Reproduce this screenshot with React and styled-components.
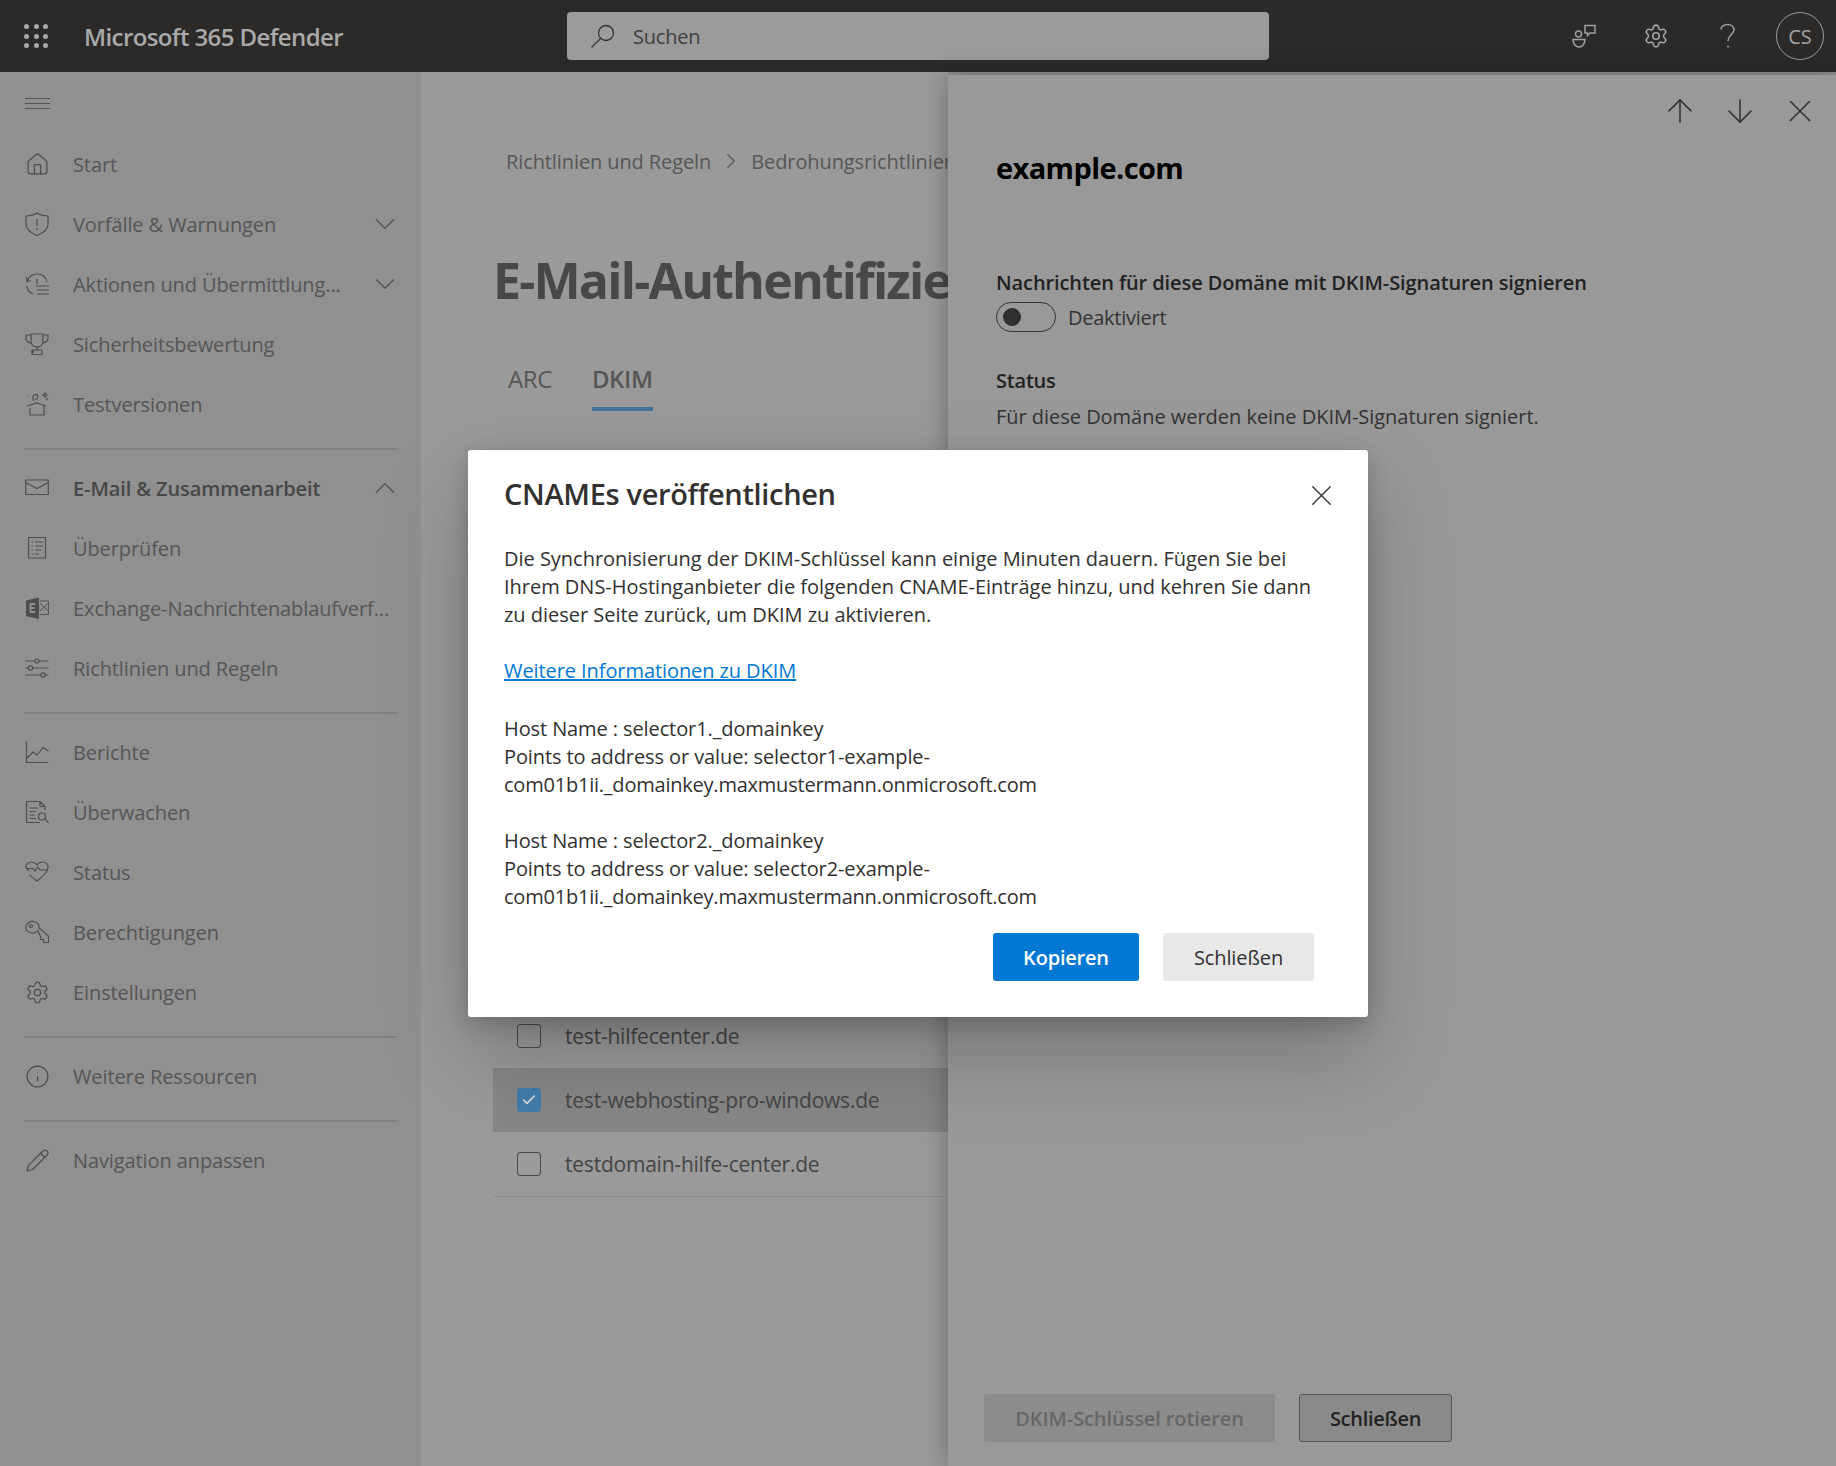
import React from 'react'
import styled, { createGlobalStyle } from 'styled-components'
import { ArrowDown, ArrowUp, Check, ChevronDown, ChevronRight, ChevronUp, House, Info, Pencil, Settings, X } from 'lucide-react'

const GlobalStyle = createGlobalStyle`
    html, body {
        margin: 0;
        padding: 0;
        height: 100%;
        overflow: hidden;
        background: #999999;
        font-family: "Open Sans", "Noto Sans", "Liberation Sans", sans-serif;
    }
    * { box-sizing: border-box; }
`

const Svg = ({ children, size = 24 }) => (
    <svg width={size} height={size} viewBox="0 0 24 24" fill="none" stroke="currentColor" strokeWidth="1.2">
        {children}
    </svg>
)

const icons = {
    home: <House size={25} strokeWidth={1.2} />,
    shield: <Svg><path d="M12 1 C9 3 6 3.8 1 4 V12 C1 17 6 21 12 23.5 C18 21 23 17 23 12 V4 C18 3.8 15 3 12 1 Z" /><path d="M12 7 V14 M12 16 V17.5" /></Svg>,
    history: <Svg><path d="M1.5 5 L2 9.5 L6 8.5" /><path d="M2.2 9 C4 4.5 8 2 12 2 C17 2 21 5 22 10" /><path d="M1.5 14 C2.5 18 5 21 8.5 22" /><path d="M12 7 V12 M10 14 H24 M12 18 H24 M12 22 H24" /></Svg>,
    trophy: <Svg><path d="M6 2 H18 V9 C18 13 15 15 12 15 C9 15 6 13 6 9 Z" /><path d="M6 3 H1 V6 C1 9 3 10.5 6 11 M18 3 H23 V6 C23 9 21 10.5 18 11" /><path d="M12 15 V18 M7 18 H17 V22.5 H7 Z M9 18 L7 22" /></Svg>,
    gift: <Svg><path d="M2 14 L12 11 L21 14 M5 16 V23 H19 V14" /><path d="M9 9 C6 4 10 1 12 3 C14 5 12 8 10 7 M3 5 H4 M1 2 H1.5 M21 6 L23 8 M18 3 L20 1 L22 3 L20 5 Z" /></Svg>,
    mail: <Svg><path d="M0.7 4 H23.3 V18.5 H0.7 Z M0.7 6.5 L12 12.5 L23.3 6.5" /></Svg>,
    review: <Svg><path d="M3.5 1.5 H20.5 V22 H3.5 Z" /><path d="M6.5 6 H8 M10 6 H18 M6.5 10 H8 M10 10 H18 M6.5 14 H8 M10 14 H16 M6.5 18 H8 M10 18 H14" /></Svg>,
    exchange: <Svg><path d="M1 4.5 L14 1.5 V23 L1 20 Z" fill="currentColor" stroke="none" /><path d="M15 5 H23.5 V18.5 H15 M15 7 L23.5 15 M23.5 7 L15 15" strokeWidth="0.9" /><path d="M5 8 H10 M5 12 H9.5 M5 16 H10 M5.5 8 V16" stroke="#909090" strokeWidth="1.8" /></Svg>,
    sliders: <Svg><path d="M0.5 5 H10 M14 5 H23.5 M0.5 12 H3 M8 12 H23.5 M0.5 19 H15 M20 19 H23.5" /><circle cx="12" cy="5" r="2" /><circle cx="5.5" cy="12" r="2.2" /><circle cx="18" cy="19" r="2.2" /></Svg>,
    chart: <Svg><path d="M1.5 1.5 V22.5 H23.5" /><path d="M2 18 L8 12 L12 15 L18 7.5 L23.5 11" /></Svg>,
    monitor: <Svg><path d="M15 22.5 H1.5 V1.5 H15 L20 6.5 V10 M15 1.5 V6.5 H20" /><path d="M4.5 8 H13 M4.5 11.5 H11 M4.5 15 H10 M4.5 18.5 H11" /><circle cx="17" cy="16.5" r="3.5" /><path d="M19.5 19 L24 23" /></Svg>,
    heart: <Svg><path d="M4 11 L1 7.5 C0.5 4.5 3 2 6 2 C8.5 2 10.5 3 12 5 C13.5 3 15.5 2 18 2 C21 2 23.5 4.5 23 7.5 C22.5 12 16 18 12 21 C9 19 6.5 17 4.5 14.5" /><path d="M1 8.5 H8 L10 11 L13 7 L15 10 H23" /></Svg>,
    key: <Svg><path d="M12.8 10.5 C11 13 8 13.5 5 12.5 C2 11.5 0.5 9 1 6.5 C1.5 3.5 4.5 1 8.5 1.5 C12 2 14.3 4.5 14 8 L23.5 16 V22.5 H18.5 V19.5 H15.5 V16.5 Z" /><circle cx="6" cy="6" r="1.5" /></Svg>,
    gear: <Settings size={25} strokeWidth={1.2} />,
    info: <Info size={25} strokeWidth={1.2} />,
    pencil: <Pencil size={25} strokeWidth={1.2} />,
}

const navGroups = [
    [
        { icon: 'home', label: 'Start' },
        { icon: 'shield', label: 'Vorfälle & Warnungen', chevron: 'down' },
        { icon: 'history', label: 'Aktionen und Übermittlung...', chevron: 'down' },
        { icon: 'trophy', label: 'Sicherheitsbewertung' },
        { icon: 'gift', label: 'Testversionen' },
    ],
    [
        { icon: 'mail', label: 'E-Mail & Zusammenarbeit', chevron: 'up', strong: true },
        { icon: 'review', label: 'Überprüfen' },
        { icon: 'exchange', label: 'Exchange-Nachrichtenablaufverf...' },
        { icon: 'sliders', label: 'Richtlinien und Regeln' },
    ],
    [
        { icon: 'chart', label: 'Berichte' },
        { icon: 'monitor', label: 'Überwachen' },
        { icon: 'heart', label: 'Status' },
        { icon: 'key', label: 'Berechtigungen' },
        { icon: 'gear', label: 'Einstellungen' },
    ],
    [{ icon: 'info', label: 'Weitere Ressourcen' }],
    [{ icon: 'pencil', label: 'Navigation anpassen' }],
]

const domains = [
    { name: 'test-hilfecenter.de' },
    { name: 'test-webhosting-pro-windows.de', checked: true },
    { name: 'testdomain-hilfe-center.de' },
]

const App = () => {
    return (
        <Page>
            <GlobalStyle />
            <TopBar>
                <TopLeft>
                    <Waffle>
                        {Array.from({ length: 9 }).map((_, i) => <WaffleDot key={i} />)}
                    </Waffle>
                    <AppTitle>Microsoft 365 Defender</AppTitle>
                </TopLeft>
                <SearchBox>
                    <svg width="26" height="26" viewBox="0 0 26 26" fill="none" stroke="#333" strokeWidth="1.3">
                        <circle cx="16" cy="10" r="7.5" />
                        <path d="M10.5 15.5 L1.5 24.5" />
                    </svg>
                    <SearchText>Suchen</SearchText>
                </SearchBox>
                <TopRight>
                    <TopIcon>
                        <svg width="24" height="24" viewBox="0 0 24 24" fill="none" stroke="currentColor" strokeWidth="1.5">
                            <circle cx="6.5" cy="10" r="3" />
                            <path d="M1 15.5 H13 C13 20 10 23 7 23 C4 23 1 20 1 15.5 Z" />
                            <path d="M13 1.5 H23 V9 H18 L15.5 11.5 V9 H13 Z" />
                        </svg>
                    </TopIcon>
                    <TopIcon><Settings size={26} strokeWidth={1.5} /></TopIcon>
                    <TopIcon>
                        <svg width="20" height="26" viewBox="0 0 20 26" fill="none" stroke="currentColor" strokeWidth="1.5">
                            <path d="M3 6.5 C3 3.5 6 1.5 9.5 1.5 C13.5 1.5 16 4 16 7 C16 11 10 12 10 18" />
                            <path d="M10 22.5 V24.5" />
                        </svg>
                    </TopIcon>
                    <Avatar>CS</Avatar>
                </TopRight>
            </TopBar>

            <Body>
                <Sidebar>
                    <Hamburger>
                        <HamburgerIcon />
                    </Hamburger>
                    {navGroups.map((group, g) => (
                        <React.Fragment key={g}>
                            {g > 0 && <NavDivider />}
                            {group.map((item) => (
                                <NavRow key={item.label}>
                                    <NavIcon>{icons[item.icon]}</NavIcon>
                                    <NavLabel $strong={item.strong}>{item.label}</NavLabel>
                                    {item.chevron === 'down' && <NavChevron><ChevronDown size={34} strokeWidth={0.9} /></NavChevron>}
                                    {item.chevron === 'up' && <NavChevron><ChevronUp size={34} strokeWidth={0.9} /></NavChevron>}
                                </NavRow>
                            ))}
                        </React.Fragment>
                    ))}
                </Sidebar>

                <Main>
                    <Breadcrumb>
                        <span>Richtlinien und Regeln</span>
                        <ChevronRight size={26} strokeWidth={1} />
                        <span>Bedrohungsrichtlinien</span>
                    </Breadcrumb>
                    <PageTitle>E-Mail-Authentifizie</PageTitle>
                    <Tabs>
                        <Tab>ARC</Tab>
                        <Tab $active>DKIM</Tab>
                    </Tabs>
                    <DomainList>
                        {domains.map((d) => (
                            <DomainRow key={d.name} $selected={d.checked}>
                                <CheckBox $checked={d.checked}>
                                    {d.checked && <Check size={16} strokeWidth={2.6} color="#d8d8d8" />}
                                </CheckBox>
                                <DomainName>{d.name}</DomainName>
                            </DomainRow>
                        ))}
                    </DomainList>
                </Main>

                <Panel>
                    <PanelNav>
                        <ArrowUp size={38} strokeWidth={1} />
                        <ArrowDown size={38} strokeWidth={1} />
                        <X size={38} strokeWidth={1} />
                    </PanelNav>
                    <PanelTitle>example.com</PanelTitle>
                    <FieldLabel>Nachrichten für diese Domäne mit DKIM-Signaturen signieren</FieldLabel>
                    <ToggleRow>
                        <Toggle><ToggleKnob /></Toggle>
                        <ToggleText>Deaktiviert</ToggleText>
                    </ToggleRow>
                    <StatusLabel>Status</StatusLabel>
                    <StatusText>Für diese Domäne werden keine DKIM-Signaturen signiert.</StatusText>
                    <PanelFooter>
                        <DisabledButton>DKIM-Schlüssel rotieren</DisabledButton>
                        <OutlineButton>Schließen</OutlineButton>
                    </PanelFooter>
                </Panel>
            </Body>

            <ModalLayer>
                <Dialog>
                    <DialogHead>
                        <DialogTitle>CNAMEs veröffentlichen</DialogTitle>
                        <DialogClose><X size={35} strokeWidth={0.95} /></DialogClose>
                    </DialogHead>
                    <Paragraph>
                        Die Synchronisierung der DKIM-Schlüssel kann einige Minuten dauern. Fügen Sie bei<br />
                        Ihrem DNS-Hostinganbieter die folgenden CNAME-Einträge hinzu, und kehren Sie dann<br />
                        zu dieser Seite zurück, um DKIM zu aktivieren.
                    </Paragraph>
                    <LinkParagraph><DialogLink href="#">Weitere Informationen zu DKIM</DialogLink></LinkParagraph>
                    <HostParagraph>
                        Host Name : selector1._domainkey<br />
                        Points to address or value: selector1-example-<br />
                        <HostTail>com01b1ii._domainkey.maxmustermann.onmicrosoft.com</HostTail>
                    </HostParagraph>
                    <HostParagraph>
                        Host Name : selector2._domainkey<br />
                        Points to address or value: selector2-example-<br />
                        <HostTail>com01b1ii._domainkey.maxmustermann.onmicrosoft.com</HostTail>
                    </HostParagraph>
                    <DialogFooter>
                        <PrimaryButton>Kopieren</PrimaryButton>
                        <SecondaryButton>Schließen</SecondaryButton>
                    </DialogFooter>
                </Dialog>
            </ModalLayer>
        </Page>
    )
}

export default App

const Page = styled.div`
    position: relative;
    width: 100%;
    height: 100vh;
    overflow: hidden;
    display: flex;
    flex-direction: column;
`
const TopBar = styled.div`
    height: 72px;
    flex-shrink: 0;
    background: #2b2a29;
    display: flex;
    align-items: center;
`
const TopLeft = styled.div`
    width: 567px;
    display: flex;
    align-items: center;
    padding-left: 24px;
`
const Waffle = styled.div`
    width: 24px;
    display: grid;
    grid-template-columns: repeat(3, 5px);
    grid-auto-rows: 5px;
    justify-content: space-between;
    row-gap: 4.5px;
`
const WaffleDot = styled.span`
    border-radius: 50%;
    background: #a8a8a8;
`
const AppTitle = styled.div`
    margin-left: 36px;
    font-size: 24px;
    font-weight: 600;
    letter-spacing: -0.6px;
    color: #a9a9a9;
    white-space: nowrap;
`
const SearchBox = styled.div`
    width: 702px;
    height: 48px;
    border-radius: 4px;
    background: #9b9b9b;
    display: flex;
    align-items: center;
    padding-left: 23px;
    color: #3f3f3f;
`
const SearchText = styled.span`
    margin-left: 17px;
    font-size: 20px;
    letter-spacing: -0.2px;
`
const TopRight = styled.div`
    flex: 1;
    display: flex;
    align-items: center;
    justify-content: flex-end;
    padding-right: 12px;
    color: #a0a0a0;
`
const TopIcon = styled.div`
    width: 72px;
    display: flex;
    justify-content: center;
`
const Avatar = styled.div`
    width: 48px;
    height: 48px;
    margin-left: 12px;
    border-radius: 50%;
    border: 1px solid #9a9a9a;
    display: flex;
    align-items: center;
    justify-content: center;
    font-size: 20px;
    color: #a5a5a5;
`
const Body = styled.div`
    flex: 1;
    display: flex;
    min-height: 0;
    background: #8f8f8f;
`
const Sidebar = styled.nav`
    width: 421px;
    flex-shrink: 0;
    background: #909090;
    padding: 0 24px 0 25px;
    color: #565656;
`
const Hamburger = styled.div`
    height: 62px;
    display: flex;
    align-items: center;
`
const HamburgerIcon = styled.span`
    width: 25px;
    height: 11px;
    border-top: 1px solid #555;
    border-bottom: 1px solid #555;
    position: relative;
    &::after {
        content: "";
        position: absolute;
        left: 0;
        right: 0;
        top: 4px;
        border-top: 1px solid #555;
    }
`
const NavRow = styled.div`
    height: 60px;
    display: flex;
    align-items: center;
`
const NavIcon = styled.span`
    width: 25px;
    height: 24px;
    flex-shrink: 0;
    display: flex;
    color: #4e4e4e;
`
const NavLabel = styled.span`
    margin-left: 23px;
    flex: 1;
    font-size: 20px;
    font-weight: ${(p) => (p.$strong ? 600 : 400)};
    letter-spacing: -0.1px;
    color: ${(p) => (p.$strong ? '#474747' : '#565656')};
    white-space: nowrap;
`
const NavChevron = styled.span`
    width: 34px;
    margin-right: -5px;
    display: flex;
`
const NavDivider = styled.div`
    height: 2px;
    margin: 14px 0 8px -1px;
    background: #808080;
`
const Main = styled.main`
    width: 527px;
    flex-shrink: 0;
    background: #9a9a9a;
    padding: 71px 0 0 85px;
    color: #484848;
    overflow: hidden;
`
const Breadcrumb = styled.div`
    display: flex;
    width: max-content;
    align-items: center;
    gap: 7px;
    height: 36px;
    font-size: 20px;
    letter-spacing: -0.1px;
    color: #565656;
    white-space: nowrap;
    svg { flex-shrink: 0; }
`
const PageTitle = styled.h1`
    margin: 69px 0 0 -13px;
    font-size: 50px;
    line-height: 64px;
    font-weight: 700;
    letter-spacing: -1.8px;
    color: #484848;
    white-space: nowrap;
`
const Tabs = styled.div`
    display: flex;
    gap: 40px;
    margin-top: 39px;
    margin-left: 2px;
`
const Tab = styled.div`
    height: 60px;
    padding-top: 11px;
    font-size: 24px;
    letter-spacing: -0.4px;
    color: #565656;
    font-weight: ${(p) => (p.$active ? 600 : 400)};
    border-bottom: 4px solid ${(p) => (p.$active ? '#44729b' : 'transparent')};
`
const DomainList = styled.div`
    margin: 593px 0 0 -13px;
    border-bottom: 1px solid #8d8d8d;
`
const DomainRow = styled.div`
    height: 64px;
    display: flex;
    align-items: center;
    padding-left: 24px;
    background: ${(p) => (p.$selected ? '#878787' : 'transparent')};
`
const CheckBox = styled.span`
    width: 24px;
    height: 24px;
    border-radius: 3px;
    border: 1px solid ${(p) => (p.$checked ? '#437cab' : '#4a4a4a')};
    background: ${(p) => (p.$checked ? '#437cab' : 'transparent')};
    display: flex;
    align-items: center;
    justify-content: center;
`
const DomainName = styled.span`
    margin-left: 24px;
    font-size: 21px;
    letter-spacing: -0.22px;
    color: #454545;
    white-space: nowrap;
`
const Panel = styled.aside`
    position: relative;
    flex: 1;
    margin-top: 3px;
    background: #999999;
    box-shadow: 0 0 24px rgba(0, 0, 0, 0.3);
    display: flex;
    flex-direction: column;
    padding: 0 48px;
    color: #262626;
`
const PanelNav = styled.div`
    display: flex;
    justify-content: flex-end;
    align-items: center;
    gap: 22px;
    height: 72px;
    margin-right: -31px;
    color: #333;
`
const PanelTitle = styled.h2`
    margin: -3px 0 0;
    font-size: 29px;
    line-height: 48px;
    font-weight: 700;
    letter-spacing: -0.6px;
    color: #000;
`
const FieldLabel = styled.div`
    margin-top: 77px;
    font-size: 20px;
    line-height: 28px;
    font-weight: 600;
    letter-spacing: -0.1px;
    color: #222;
    white-space: nowrap;
`
const ToggleRow = styled.div`
    display: flex;
    align-items: center;
    margin-top: 5px;
`
const Toggle = styled.div`
    width: 60px;
    height: 30px;
    border-radius: 15px;
    border: 1px solid #333;
    display: flex;
    align-items: center;
    padding-left: 6px;
`
const ToggleKnob = styled.span`
    width: 18px;
    height: 18px;
    border-radius: 50%;
    background: #2f2f2f;
`
const ToggleText = styled.span`
    margin-left: 12px;
    font-size: 20px;
    letter-spacing: -0.25px;
    color: #333;
`
const StatusLabel = styled.div`
    margin-top: 33px;
    font-size: 20px;
    line-height: 32px;
    font-weight: 600;
    letter-spacing: -0.2px;
    color: #222;
`
const StatusText = styled.div`
    margin-top: 4px;
    font-size: 20px;
    line-height: 32px;
    letter-spacing: -0.03px;
    color: #333;
    white-space: nowrap;
`
const PanelFooter = styled.div`
    margin: auto 0 24px -12px;
    display: flex;
    gap: 24px;
`
const DisabledButton = styled.div`
    width: 291px;
    height: 48px;
    border-radius: 3px;
    background: #8c8c8c;
    color: #676767;
    font-size: 20px;
    font-weight: 600;
    letter-spacing: -0.1px;
    display: flex;
    align-items: center;
    justify-content: center;
`
const OutlineButton = styled.div`
    width: 153px;
    height: 48px;
    border-radius: 3px;
    border: 1.5px solid #555;
    background: #8a8a8a;
    color: #222;
    font-size: 20px;
    font-weight: 600;
    letter-spacing: -0.3px;
    display: flex;
    align-items: center;
    justify-content: center;
`
const ModalLayer = styled.div`
    position: absolute;
    inset: 0;
    display: flex;
    align-items: center;
    justify-content: center;
`
const Dialog = styled.div`
    width: 900px;
    height: 567px;
    background: #fff;
    border-radius: 3px;
    padding: 21px 36px 0;
    color: #323130;
    box-shadow: 0 38px 86px rgba(0, 0, 0, 0.22), 0 7px 22px rgba(0, 0, 0, 0.18);
`
const DialogHead = styled.div`
    display: flex;
    align-items: center;
    justify-content: space-between;
    height: 46px;
    margin-bottom: 28px;
`
const DialogTitle = styled.h3`
    margin: 0;
    font-size: 29px;
    font-weight: 600;
    letter-spacing: -0.33px;
    color: #323130;
`
const DialogClose = styled.span`
    display: flex;
    margin: 4px -7px 0 0;
    color: #333;
`
const Paragraph = styled.p`
    margin: 0 0 28px;
    font-size: 20px;
    line-height: 28px;
    letter-spacing: -0.02px;
    white-space: nowrap;
`
const LinkParagraph = styled(Paragraph)`
    margin-bottom: 30px;
    letter-spacing: -0.08px;
`
const HostParagraph = styled(Paragraph)`
    letter-spacing: -0.1px;
`
const HostTail = styled.span`
    letter-spacing: -0.22px;
`
const DialogLink = styled.a`
    color: #0078d4;
`
const DialogFooter = styled.div`
    margin: -6px 18px 0 0;
    display: flex;
    justify-content: flex-end;
    gap: 24px;
`
const PrimaryButton = styled.div`
    width: 146px;
    height: 48px;
    padding-top: 2px;
    border-radius: 3px;
    background: #0078d4;
    color: #fff;
    font-size: 20px;
    font-weight: 600;
    letter-spacing: -0.2px;
    display: flex;
    align-items: center;
    justify-content: center;
`
const SecondaryButton = styled.div`
    width: 151px;
    height: 48px;
    padding-top: 2px;
    border-radius: 3px;
    background: #e8e8e8;
    color: #323130;
    font-size: 20px;
    letter-spacing: -0.1px;
    display: flex;
    align-items: center;
    justify-content: center;
`
